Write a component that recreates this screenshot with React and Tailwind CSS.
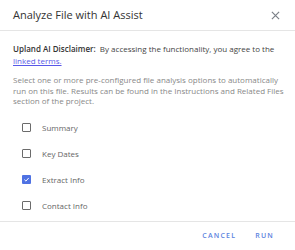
import { useState } from "react";

const options = ["Summary", "Key Dates", "Extract Info", "Contact Info"];

function Box({ checked }) {
  if (checked) {
    return (
      <span className="flex h-[9px] w-[9px] items-center justify-center rounded-[1px] bg-[#4f72e3]">
        <svg width="7" height="7" viewBox="0 0 10 10" fill="none">
          <path d="M2 5.2 L4.2 7.3 L8.2 2.8" stroke="white" strokeWidth="1.4" />
        </svg>
      </span>
    );
  }
  return <span className="h-[9px] w-[9px] rounded-[1px] border border-[#6b6b6b] bg-white" />;
}

export default function App() {
  const [checked, setChecked] = useState({ "Extract Info": true });

  return (
    <div
      className="flex h-[250px] w-[295px] flex-col bg-white text-[#555]"
      style={{ fontFamily: '"Open Sans", sans-serif' }}
    >
      <div className="flex h-[31px] shrink-0 items-center justify-between border-b border-[#e5e5e5] pl-[13px] pr-[15px]">
        <h1 className="text-[11px] font-normal text-[#333]">Analyze File with AI Assist</h1>
        <svg width="9" height="9" viewBox="0 0 10 10" stroke="#7a7f87" strokeWidth="1.3">
          <path d="M1 1 L9 9 M9 1 L1 9" />
        </svg>
      </div>

      <div className="flex-1 pl-[13px] pr-[10px] pt-[12px]">
        <p className="text-[8px] leading-[11.5px] text-[#444]">
          <span className="font-semibold text-[#333]">Upland AI Disclaimer:</span>&nbsp; By accessing the
          functionality, you agree to the{" "}
          <a href="#" className="text-[#5858e8] underline">
            linked terms.
          </a>
        </p>
        <p className="mt-[9px] text-[8px] leading-[10.5px] text-[#888]">
          Select one or more pre-configured file analysis options to automatically run on this file. Results can
          be found in the Instructions and Related Files section of the project.
        </p>

        <div className="mt-[8px] flex flex-col pl-[9px]">
          {options.map((o) => (
            <label
              key={o}
              className="flex h-[26px] cursor-pointer items-center gap-[11px] text-[8px] text-[#666]"
              onClick={() => setChecked({ ...checked, [o]: !checked[o] })}
            >
              <Box checked={!!checked[o]} />
              {o}
            </label>
          ))}
        </div>
      </div>

      <div className="flex h-[29px] shrink-0 items-center justify-end gap-[19px] border-t border-[#e5e5e5] pr-[21px]">
        <button className="text-[7px] font-semibold tracking-[1.2px] text-[#5b82de]">CANCEL</button>
        <button className="text-[7px] font-semibold tracking-[1.2px] text-[#5b82de]">RUN</button>
      </div>
    </div>
  );
}
